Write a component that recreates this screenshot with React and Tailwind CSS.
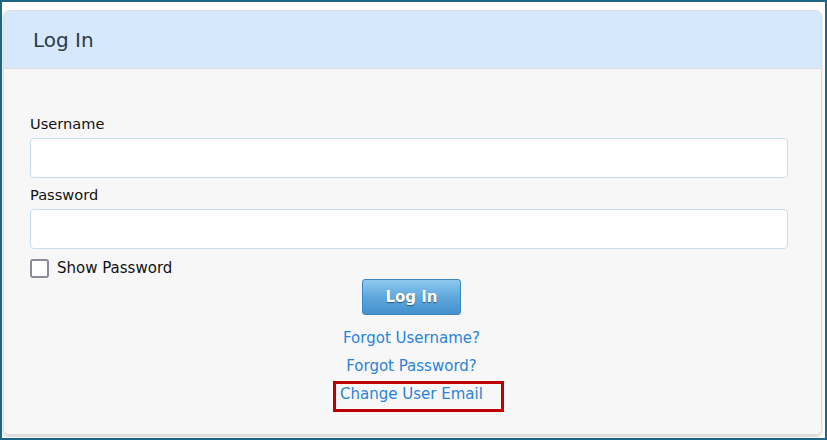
import React from 'react';

const font = { fontFamily: '"DejaVu Sans", Verdana, sans-serif' };

const Field = ({ label, type = 'text', className = '' }) => (
    <div className={`flex flex-col ${className}`}>
        <label className="text-[14.6px] leading-[20px] text-[#111]">{label}</label>
        <input
            type={type}
            className="mt-[4px] h-[40px] w-full rounded-[4px] border border-[#c5deef] bg-white px-2 outline-none"
        />
    </div>
);

export default function App() {
    return (
        <div
            className="flex h-[440px] w-[827px] flex-col border-2 border-[#1f6686] bg-white pb-[3px] pl-[1px] pr-[3px] pt-[8px]"
            style={font}
        >
            {/* 卡片 */}
            <div className="flex flex-1 flex-col overflow-hidden rounded-[6px] border border-[#dcdcdc] shadow-[0_2px_3px_rgba(0,0,0,0.18)]">
                {/* 標題 */}
                <div className="flex h-[58px] items-center border-b border-[#dcdcdc] bg-[#d6e8fb] pl-[29px]">
                    <h1 className="text-[20px] text-[#2c3a48]">Log In</h1>
                </div>

                {/* 表單 */}
                <div className="flex flex-1 flex-col bg-[#f7f7f7] pl-[26px] pr-[33px] pt-[45px]">
                    <Field label="Username" />
                    <Field label="Password" type="password" className="mt-[7px]" />

                    <label className="mt-[10px] flex items-center gap-[8px]">
                        <span className="h-[19px] w-[19px] rounded-[3px] border-2 border-[#8b8a97] bg-white" />
                        <span className="text-[15px] leading-[19px] text-[#111]">Show Password</span>
                    </label>

                    <div className="-ml-[28px] -mr-[33px] flex flex-col items-center">
                        <button className="mt-[1px] h-[36px] w-[99px] rounded-[3px] border border-[#3d87c1] bg-gradient-to-b from-[#8ec8ee] via-[#5fa8dd] to-[#4290cd] text-[15px] font-bold text-white [text-shadow:0_1px_1px_rgba(0,0,0,0.45)]">
                            Log In
                        </button>

                        <a className="mt-[9px] text-[15px] leading-[28px] text-[#2a83d8]">Forgot Username?</a>
                        <a className="text-[15px] leading-[28px] text-[#2a83d8]">Forgot Password?</a>
                        <span className="relative">
                            <a className="text-[15px] leading-[28px] text-[#2a83d8]">Change User Email</a>
                            <span className="absolute -left-[7px] -right-[21px] top-[1px] h-[31px] border-[3px] border-[#c00000]" />
                        </span>
                    </div>
                </div>
            </div>
        </div>
    );
}
